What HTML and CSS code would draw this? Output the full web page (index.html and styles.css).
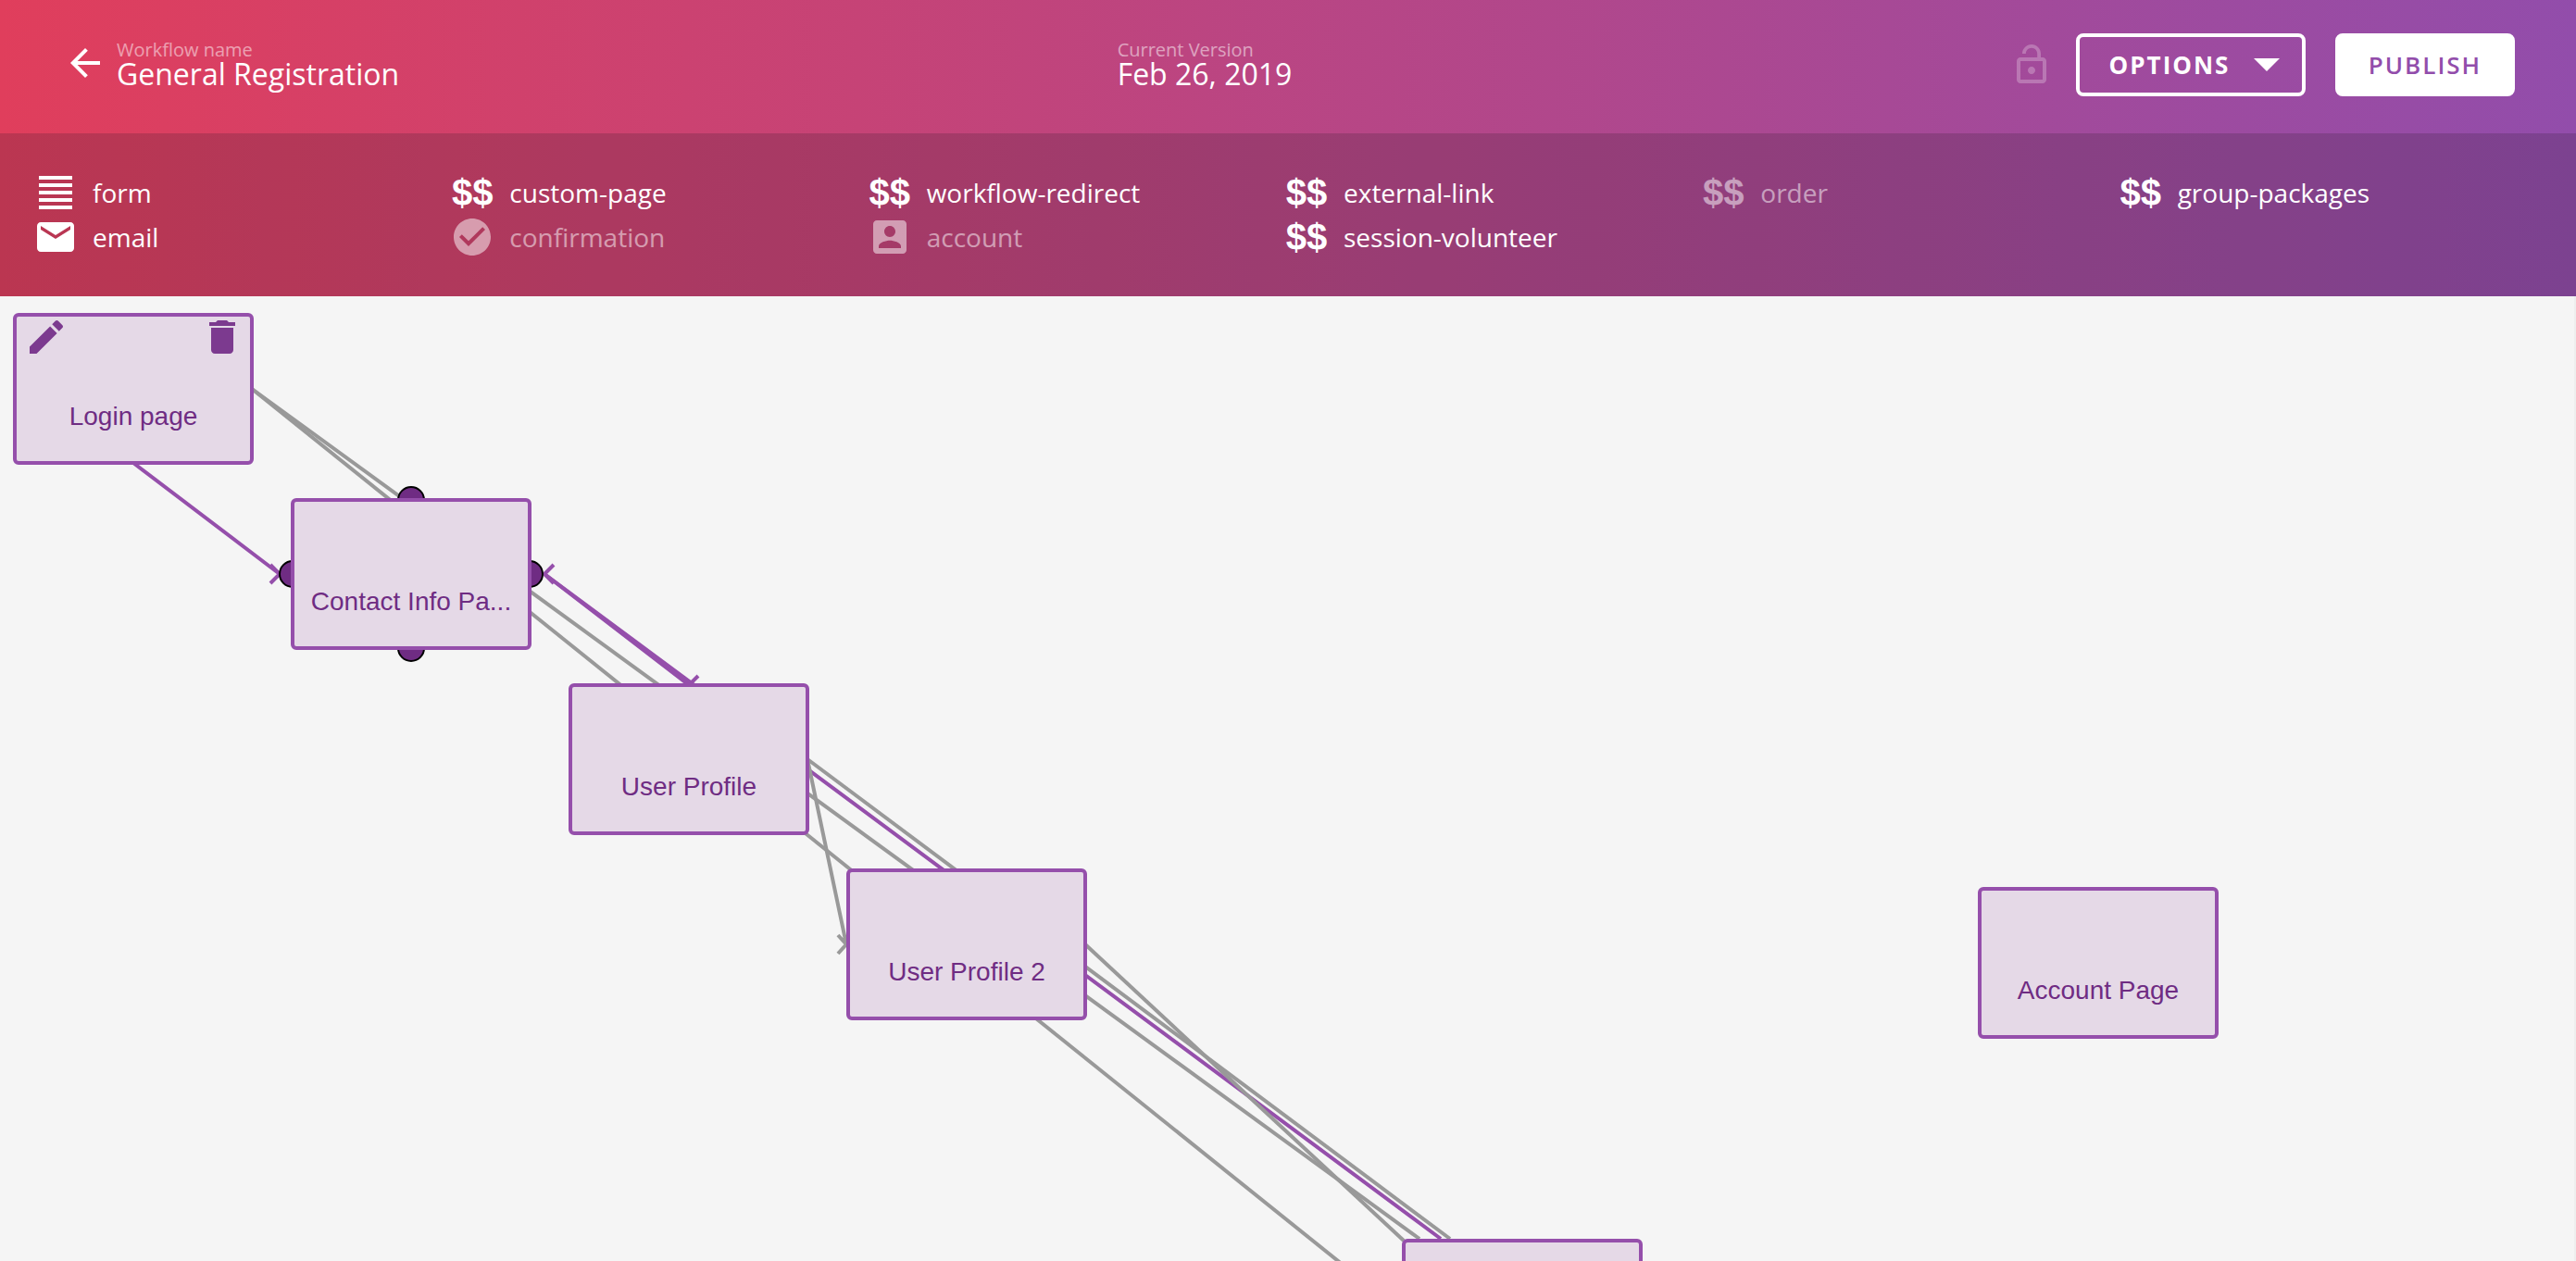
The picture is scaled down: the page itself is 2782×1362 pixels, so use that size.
FILE: index.html
```html
<!DOCTYPE html>
<html lang="en">
<head>
<meta charset="utf-8">
<title>General Registration</title>
<link rel="stylesheet" href="styles.css">
</head>
<body>
<header class="top">
  <div class="bar">
    <div class="bar-left">
      <button class="icon-button" aria-label="Back"><svg width="48" height="48" viewBox="0 0 24 24"><path d="M20 11H7.83l5.59-5.59L12 4l-8 8 8 8 1.41-1.41L7.83 13H20v-2z"/></svg></button>
      <div class="field"><span class="caption">Workflow name</span><h1 class="value">General Registration</h1></div>
    </div>
    <div class="bar-center">
      <div class="field"><span class="caption">Current Version</span><span class="value">Feb 26, 2019</span></div>
    </div>
    <div class="bar-right">
      <svg class="lock" width="48" height="48" viewBox="0 0 24 24"><path d="M12 17c1.100 0 2-.9 2-2s-.9-2-2-2-2 .9-2 2 .9 2 2 2zm6-9h-1V6c0-2.760-2.240-5-5-5S7 3.240 7 6h1.900c0-1.710 1.390-3.100 3.100-3.100 1.710 0 3.100 1.390 3.100 3.100v2H6c-1.100 0-2 .9-2 2v10c0 1.100.9 2 2 2h12c1.100 0 2-.9 2-2V10c0-1.100-.9-2-2-2zm0 12H6V10h12v10z"/></svg>
      <button class="button outline">OPTIONS<svg width="28" height="14" viewBox="0 0 28 14"><path d="M0 0h28L14 14z"/></svg></button>
      <button class="button solid">PUBLISH</button>
    </div>
  </div>
  <ul class="palette">
    <li class="tool"><svg class="glyph" width="48" height="40" viewBox="0 0 48 40"><path d="M6 2h36v4H6zM6 10h36v4H6zM6 18h36v4H6zM6 26h36v4H6zM6 34h36v4H6z"/></svg>form</li>
    <li class="tool"><b class="glyph">$$</b>custom-page</li>
    <li class="tool"><b class="glyph">$$</b>workflow-redirect</li>
    <li class="tool"><b class="glyph">$$</b>external-link</li>
    <li class="tool off"><b class="glyph">$$</b>order</li>
    <li class="tool"><b class="glyph">$$</b>group-packages</li>
    <li class="tool"><svg class="glyph" width="48" height="48" viewBox="0 0 24 24"><path d="M20 4H4c-1.100 0-1.990.9-1.990 2L2 18c0 1.100.9 2 2 2h16c1.100 0 2-.9 2-2V6c0-1.100-.9-2-2-2zm0 4l-8 5-8-5V6l8 5 8-5v2z"/></svg>email</li>
    <li class="tool off"><svg class="glyph" width="48" height="48" viewBox="0 0 24 24"><path d="M12 2C6.480 2 2 6.480 2 12s4.480 10 10 10 10-4.480 10-10S17.520 2 12 2zm-2 15l-5-5 1.410-1.410L10 14.170l7.590-7.590L19 8l-9 9z"/></svg>confirmation</li>
    <li class="tool off"><svg class="glyph" width="48" height="48" viewBox="0 0 24 24"><path d="M3 5v14c0 1.100.89 2 2 2h14c1.100 0 2-.9 2-2V5c0-1.100-.9-2-2-2H5c-1.110 0-2 .9-2 2zm12 4c0 1.660-1.340 3-3 3s-3-1.340-3-3 1.340-3 3-3 3 1.340 3 3zm-9 8c0-2 4-3.100 6-3.100s6 1.100 6 3.100v1H6v-1z"/></svg>account</li>
    <li class="tool"><b class="glyph">$$</b>session-volunteer</li>
  </ul>
</header>
<main class="canvas">
  <svg class="links" width="100%" height="100%">
    <g class="link active">
      <path d="M144 180L302 300M292 290l10 10-10 10"/>
      <path d="M588 300L744 420M598 290l-10 10 10 10"/>
      <path d="M588 300L1556 1018M754 410l-10 10-10-10"/>
    </g>
    <g class="link">
      <path d="M272 100L1533 1018"/>
      <path d="M272 100L1470 1062"/>
      <path d="M872 500L1566 1018"/>
      <path d="M872 500L914 700M905 690l9 10-9 10"/>
      <path d="M1172 700L1516 1020"/>
    </g>
    <g class="port">
      <circle cx="444" cy="220" r="14"/><circle cx="444" cy="380" r="14"/>
      <circle cx="316" cy="300" r="14"/><circle cx="572" cy="300" r="14"/>
    </g>
  </svg>
  <article class="node login">
    <div class="node-actions">
      <button class="icon-button" aria-label="Edit"><svg width="48" height="48" viewBox="0 0 24 24"><path d="M3 17.250V21h3.750L17.810 9.940l-3.750-3.750L3 17.250zM20.710 7.040c.39-.39.39-1.020 0-1.410l-2.340-2.340c-.39-.39-1.020-.39-1.410 0l-1.830 1.830 3.750 3.750 1.830-1.830z"/></svg></button>
      <button class="icon-button" aria-label="Delete"><svg width="48" height="48" viewBox="0 0 24 24"><path d="M6 19c0 1.100.9 2 2 2h8c1.100 0 2-.9 2-2V7H6v12zM19 4h-3.500l-1-1h-5l-1 1H5v2h14V4z"/></svg></button>
    </div>Login page</article>
  <article class="node contact">Contact Info Pa...</article>
  <article class="node profile">User Profile</article>
  <article class="node profile-2">User Profile 2</article>
  <article class="node account">Account Page</article>
  <article class="node next"></article>
</main>
</body>
</html>
```
FILE: styles.css
```css
* { box-sizing: border-box; }
body {
  margin: 0;
  min-height: 100vh;
  display: flex;
  flex-direction: column;
  background: #f5f5f5;
  font-family: "Open Sans", sans-serif;
}
.top { color: #fff; background: linear-gradient(90deg, #e03e5c, #924dab); }
svg { display: block; fill: currentColor; }
button { font: inherit; color: inherit; cursor: pointer; }
.icon-button { padding: 0; border: 0; background: none; }
.bar {
  display: grid;
  grid-template-columns: 43% 1fr auto;
  align-items: center;
  height: 144px;
  padding: 0 66px 4px 68px;
}
.bar-left, .bar-center, .bar-right { display: flex; align-items: center; }
.bar-left, .bar-center { padding-bottom: 4px; }
.bar-left { gap: 10px; }
.field { display: flex; flex-direction: column; }
.caption { font-size: 20px; line-height: 24px; opacity: .5; }
.value { margin: 0; font-size: 32px; font-weight: 400; line-height: 28px; }
.lock { margin-right: 24px; opacity: .25; }
.button {
  display: flex;
  align-items: center;
  justify-content: center;
  height: 68px;
  padding: 0;
  border: 4px solid #fff;
  border-radius: 8px;
  font-size: 26px;
  font-weight: 700;
  letter-spacing: 2px;
}
.outline { gap: 26px; width: 248px; margin-right: 32px; padding-left: 8px; background: none; }
.solid { width: 194px; background: #fff; color: #924dab; font-weight: 600; }
.palette {
  display: grid;
  grid-template-columns: repeat(6, 1fr);
  grid-auto-rows: 48px;
  align-content: center;
  height: 176px;
  margin: 0;
  padding: 0 44px 0 36px;
  list-style: none;
  background: rgba(40, 24, 40, .2);
}
.tool { display: flex; align-items: center; gap: 16px; font-size: 28px; }
.glyph { width: 48px; font: 700 40px "Liberation Sans", sans-serif; text-align: center; }
.off { opacity: .5; }
.canvas { position: relative; flex: 1; overflow: hidden; border-right: 2px solid #eee; }
.links { position: absolute; inset: 0; }
.link { fill: none; stroke: #999; stroke-width: 4px; }
.active { stroke: #954fab; }
.port { fill: #6f2c83; stroke: #000; stroke-width: 2px; }
.node {
  position: absolute;
  display: flex;
  align-items: center;
  justify-content: center;
  width: 260px;
  height: 164px;
  padding-top: 60px;
  border: 4px solid #954fab;
  border-radius: 6px;
  background: #e5d9e7;
  color: #6f2c83;
  font: 28px "Liberation Sans", sans-serif;
}
.node-actions {
  position: absolute;
  inset: -2px 6px auto 8px;
  display: flex;
  justify-content: space-between;
  color: #7c3a8f;
}
.login { left: 14px; top: 18px; }
.contact { left: 314px; top: 218px; }
.profile { left: 614px; top: 418px; }
.profile-2 { left: 914px; top: 618px; }
.next { left: 1514px; top: 1018px; }
.account { left: 2136px; top: 638px; }
```
